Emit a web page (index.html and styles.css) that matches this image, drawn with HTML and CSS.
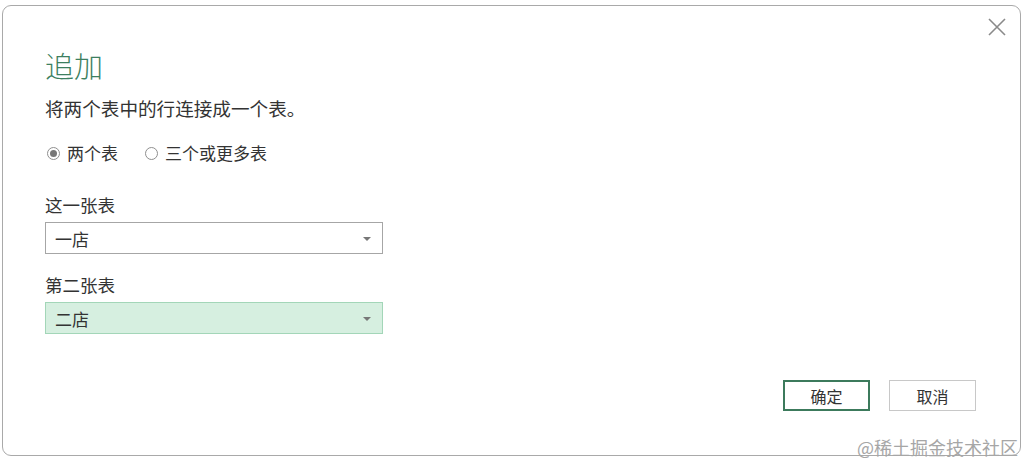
FILE: index.html
```html
<!DOCTYPE html>
<html lang="zh-CN">
<head>
<meta charset="utf-8">
<title>追加</title>
<link rel="stylesheet" href="styles.css">
</head>
<body>
<div class="page">
  <div class="dialog">
    <button class="close" aria-label="关闭">
      <svg width="18" height="18" viewBox="0 0 18 18"><path d="M1 1 L17 17 M17 1 L1 17" stroke="#8a8a8a" stroke-width="1.6" fill="none"/></svg>
    </button>
    <h1 class="title">追加</h1>
    <p class="desc">将两个表中的行连接成一个表。</p>
    <div class="radios">
      <label class="radio"><span class="dot checked"></span>两个表</label>
      <label class="radio"><span class="dot"></span>三个或更多表</label>
    </div>
    <div class="field-label first">这一张表</div>
    <div class="select"><span>一店</span><span class="caret"></span></div>
    <div class="field-label">第二张表</div>
    <div class="select active"><span>二店</span><span class="caret"></span></div>
    <div class="actions">
      <button class="btn primary">确定</button>
      <button class="btn">取消</button>
    </div>
    <div class="watermark">@稀土掘金技术社区</div>
  </div>
</div>
</body>
</html>
```

FILE: styles.css
```css
* { box-sizing: border-box; }
html, body { margin: 0; padding: 0; background: #fff; }
body {
  font-family: "Microsoft YaHei", "Noto Sans CJK SC", "Noto Sans", sans-serif;
  color: #333;
  width: 1024px;
  height: 465px;
  overflow: hidden;
}
.page {
  padding: 5px 3px 9px 2px;
  height: 465px;
}
.dialog {
  position: relative;
  height: 451px;
  border: 1px solid #a9a9a9;
  border-radius: 9px;
  background: #fff;
  padding: 41px 44px 0 42px;
  display: flex;
  flex-direction: column;
}
.close {
  position: absolute;
  top: 11px;
  right: 13px;
  width: 20px;
  height: 20px;
  padding: 0;
  border: 0;
  background: none;
  display: flex;
  align-items: center;
  justify-content: center;
}
.title {
  margin: 0;
  font-size: 29px;
  line-height: 36px;
  font-weight: 300;
  color: #3d7f5f;
}
.desc {
  margin: 13px 0 0;
  font-size: 18.6px;
  line-height: 24px;
  color: #333;
}
.radios {
  margin-top: 21px;
  display: flex;
  gap: 25px;
  font-size: 17px;
  line-height: 24px;
}
.radio {
  display: flex;
  align-items: center;
  gap: 7px;
  color: #333;
}
.dot {
  width: 13px;
  height: 13px;
  border: 1px solid #8f8f8f;
  border-radius: 50%;
  display: flex;
  align-items: center;
  justify-content: center;
  margin-left: 2px;
}
.dot.checked::after {
  content: "";
  width: 7px;
  height: 7px;
  border-radius: 50%;
  background: #777;
}
.field-label {
  margin-top: 19px;
  font-size: 17.5px;
  line-height: 24px;
  color: #333;
}
.field-label.first { margin-top: 28px; }
.select {
  margin-top: 5px;
  width: 338px;
  height: 32px;
  border: 1px solid #a6a6a6;
  background: #fff;
  display: flex;
  align-items: center;
  justify-content: space-between;
  padding: 0 11px 0 9px;
  font-size: 17px;
  color: #333;
}
.select.active {
  background: #d6efe0;
  border-color: #a3d6b8;
}
.caret {
  width: 0;
  height: 0;
  border-left: 4px solid transparent;
  border-right: 4px solid transparent;
  border-top: 4px solid #777;
  margin-top: 1px;
}
.actions {
  margin-top: 46px;
  display: flex;
  justify-content: flex-end;
  gap: 19px;
}
.btn {
  width: 87px;
  height: 31px;
  border: 1px solid #c8c8c8;
  background: #fff;
  font-family: inherit;
  font-size: 16px;
  color: #333;
  padding: 0;
}
.btn.primary {
  border: 2px solid #3c7a5c;
}
.watermark {
  position: absolute;
  right: 2px;
  bottom: -4px;
  font-size: 18px;
  line-height: 24px;
  color: #a6a6a6;
  letter-spacing: 0;
}
```
